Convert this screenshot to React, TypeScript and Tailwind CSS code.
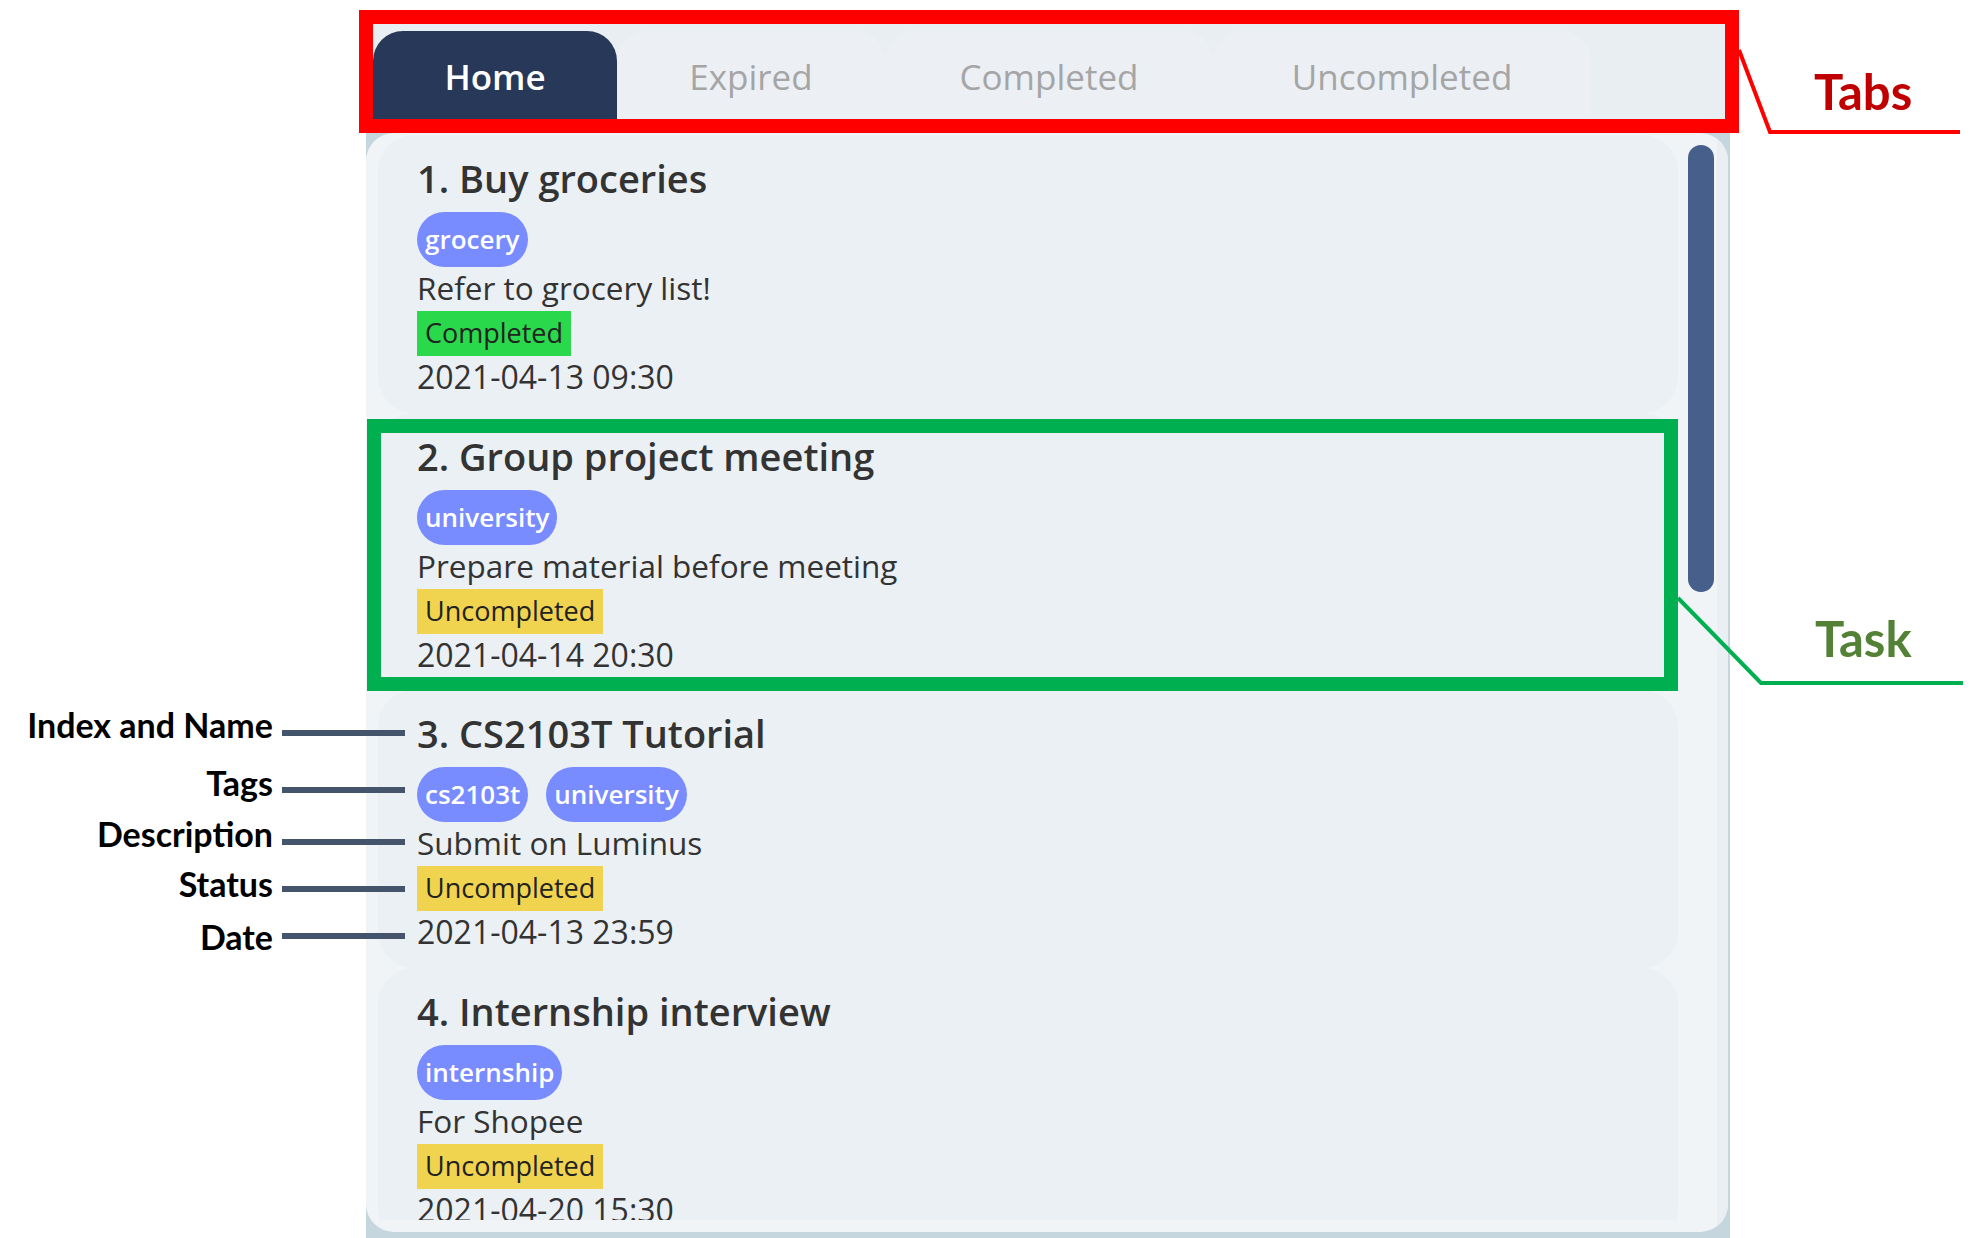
import React from "react";

type Task = {
  name: string;
  tags: string[];
  desc: string;
  done: boolean;
  date: string;
};

const tasks: Task[] = [
  { name: "Buy groceries", tags: ["grocery"], desc: "Refer to grocery list!", done: true, date: "2021-04-13 09:30" },
  { name: "Group project meeting", tags: ["university"], desc: "Prepare material before meeting", done: false, date: "2021-04-14 20:30" },
  { name: "CS2103T Tutorial", tags: ["cs2103t", "university"], desc: "Submit on Luminus", done: false, date: "2021-04-13 23:59" },
  { name: "Internship interview", tags: ["internship"], desc: "For Shopee", done: false, date: "2021-04-20 15:30" },
];

const tabs = [
  { label: "Home", width: "w-[244px]", active: true },
  { label: "Expired", width: "w-[268px]", active: false },
  { label: "Completed", width: "w-[328px]", active: false },
  { label: "Uncompleted", width: "w-[378px]", active: false },
];

// annotation rows on the left: gap above, line offset from text top
const labels = [
  { text: "Index and Name", mt: "mt-0", lineMt: "mt-[24px]" },
  { text: "Tags", mt: "mt-[20px]", lineMt: "mt-[23px]" },
  { text: "Description", mt: "mt-[13px]", lineMt: "mt-[24px]" },
  { text: "Status", mt: "mt-[12px]", lineMt: "mt-[21px]" },
  { text: "Date", mt: "mt-[15px]", lineMt: "mt-[15px]" },
];

function TaskCard({ task, index }: { task: Task; index: number }) {
  return (
    <div className="h-[277.5px] shrink-0 rounded-[36px] bg-[#ebf0f4] pl-[39px] pt-[20px] text-[#333333]">
      <h2 className="text-[38px] font-semibold leading-[46px]">
        {index}. {task.name}
      </h2>
      <div className="mt-[11px] flex gap-[18px]">
        {task.tags.map((t) => (
          <span
            key={t}
            className="flex h-[55px] items-center rounded-full bg-[#788bff] px-[8px] text-[26px] font-semibold text-white"
          >
            {t}
          </span>
        ))}
      </div>
      <p className="mt-[3px] text-[31.5px] leading-[36px]">{task.desc}</p>
      <div className="mt-[5px] flex">
        <span
          className={
            task.done
              ? "flex h-[45px] items-center bg-[#2ad84c] px-[8px] text-[27px] text-[#222222]"
              : "flex h-[45px] items-center bg-[#f0d44f] px-[8px] text-[27px] text-[#222222]"
          }
        >
          {task.done ? "Completed" : "Uncompleted"}
        </span>
      </div>
      <p className="mt-[3px] text-[32px] leading-[36px]">{task.date}</p>
    </div>
  );
}

export default function App() {
  return (
    <div className="relative h-[1238px] w-[1976px] overflow-hidden bg-white font-['Open_Sans','Noto_Sans',sans-serif]">
      <div className="flex h-full">
        <div className="w-[366px] shrink-0" />

        {/* app window */}
        <div className="flex w-[1364px] shrink-0 flex-col pt-[16px]">
          <div className="flex h-[117px] items-end bg-[#e9eef2] pl-[7px]">
            {tabs.map((tab) =>
              tab.active ? (
                <div
                  key={tab.label}
                  className={`${tab.width} flex h-[102px] items-center justify-center rounded-t-[30px] bg-[#273859] pb-[10px] text-[35px] font-semibold text-white`}
                >
                  {tab.label}
                </div>
              ) : (
                <div
                  key={tab.label}
                  className={`${tab.width} flex h-[102px] items-center justify-center rounded-t-[30px] bg-[#ecf0f4] pb-[10px] text-[35px] text-[#a5a5a5]`}
                >
                  {tab.label}
                </div>
              )
            )}
          </div>

          <div className="flex-1 bg-[#c6d6de] pb-[6px] pr-[2px]">
            <div className="flex h-full overflow-hidden rounded-[28px] bg-[#f0f4f7]">
              <div className="flex h-[1087px] w-[1312px] shrink-0 flex-col overflow-hidden pl-[12px] pt-[2px]">
                {tasks.map((t, i) => (
                  <TaskCard key={t.name} task={t} index={i + 1} />
                ))}
              </div>
              <div className="ml-[10px] w-[26px] shrink-0 pt-[12px]">
                <div className="h-[447px] rounded-full bg-[#465f8b]" />
              </div>
              <div className="ml-[3px] w-[11px] shrink-0 bg-[#eaeff3]" />
            </div>
          </div>
        </div>
      </div>

      {/* annotations */}
      <div className="pointer-events-none absolute left-0 top-[706px] flex w-[405px] flex-col font-['Lato',sans-serif] text-[34px] font-bold leading-[38px] text-black">
        {labels.map((l) => (
          <div key={l.text} className={`${l.mt} flex items-start justify-end gap-[9px]`}>
            <span>{l.text}</span>
            <span className={`${l.lineMt} h-[6px] w-[123px] bg-[#44546a]`} />
          </div>
        ))}
      </div>

      <div className="pointer-events-none absolute left-[359px] top-[10px] h-[123px] w-[1380px] border-[14px] border-[#ff0000]" />
      <div className="pointer-events-none absolute left-[367px] top-[419px] h-[272px] w-[1311px] border-[14px] border-[#00b050]" />

      <svg className="pointer-events-none absolute inset-0" width="1976" height="1238" viewBox="0 0 1976 1238">
        <polyline points="1739,50 1770,132 1960,132" fill="none" stroke="#ff0000" strokeWidth="4" />
        <polyline points="1678,598 1761,683 1963,683" fill="none" stroke="#00b050" strokeWidth="4" />
      </svg>

      <span className="absolute left-[1814px] top-[67px] font-['Lato',sans-serif] text-[49px] font-bold leading-[49px] text-[#c00000]">
        Tabs
      </span>
      <span className="absolute left-[1815px] top-[614px] font-['Lato',sans-serif] text-[49px] font-bold leading-[49px] text-[#538135]">
        Task
      </span>
    </div>
  );
}
